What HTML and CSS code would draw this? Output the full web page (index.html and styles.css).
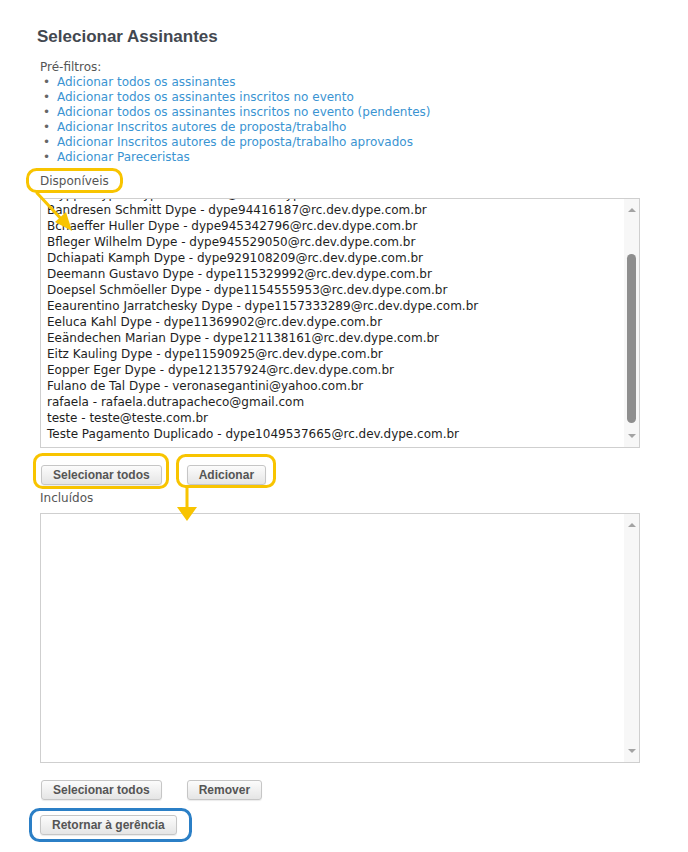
FILE: index.html
```html
<!DOCTYPE html>
<html lang="pt-BR">
<head>
<meta charset="utf-8">
<title>Selecionar Assinantes</title>
<link rel="stylesheet" href="styles.css">
</head>
<body>
<div class="page">
  <h1 class="title">Selecionar Assinantes</h1>
  <div class="prefilters">
    <div class="pf-label">Pré-filtros:</div>
    <ul class="pf-list">
      <li><a href="#">Adicionar todos os assinantes</a></li>
      <li><a href="#">Adicionar todos os assinantes inscritos no evento</a></li>
      <li><a href="#">Adicionar todos os assinantes inscritos no evento (pendentes)</a></li>
      <li><a href="#">Adicionar Inscritos autores de proposta/trabalho</a></li>
      <li><a href="#">Adicionar Inscritos autores de proposta/trabalho aprovados</a></li>
      <li><a href="#">Adicionar Pareceristas</a></li>
    </ul>
  </div>

  <div class="field-label first">Disponíveis</div>
  <div class="listbox">
    <div class="lb-items">
      <div class="lb-inner">
        <div>Alyppe Dype - dype94123456@rc.dev.dype.com.br</div>
        <div>Bandresen Schmitt Dype - dype94416187@rc.dev.dype.com.br</div>
        <div>Bchaeffer Huller Dype - dype945342796@rc.dev.dype.com.br</div>
        <div>Bfleger Wilhelm Dype - dype945529050@rc.dev.dype.com.br</div>
        <div>Dchiapati Kamph Dype - dype929108209@rc.dev.dype.com.br</div>
        <div>Deemann Gustavo Dype - dype115329992@rc.dev.dype.com.br</div>
        <div>Doepsel Schmöeller Dype - dype1154555953@rc.dev.dype.com.br</div>
        <div>Eeaurentino Jarratchesky Dype - dype1157333289@rc.dev.dype.com.br</div>
        <div>Eeluca Kahl Dype - dype11369902@rc.dev.dype.com.br</div>
        <div>Eeändechen Marian Dype - dype121138161@rc.dev.dype.com.br</div>
        <div>Eitz Kauling Dype - dype11590925@rc.dev.dype.com.br</div>
        <div>Eopper Eger Dype - dype121357924@rc.dev.dype.com.br</div>
        <div>Fulano de Tal Dype - veronasegantini@yahoo.com.br</div>
        <div>rafaela - rafaela.dutrapacheco@gmail.com</div>
        <div>teste - teste@teste.com.br</div>
        <div>Teste Pagamento Duplicado - dype1049537665@rc.dev.dype.com.br</div>
      </div>
    </div>
    <div class="scrollbar">
      <span class="arrow up"></span>
      <div class="track"><div class="thumb"></div></div>
      <span class="arrow down"></span>
    </div>
  </div>
  <div class="btn-row">
    <button class="btn">Selecionar todos</button>
    <button class="btn">Adicionar</button>
  </div>

  <div class="field-label">Incluídos</div>
  <div class="listbox empty">
    <div class="lb-items"></div>
    <div class="scrollbar">
      <span class="arrow up"></span>
      <div class="track"></div>
      <span class="arrow down"></span>
    </div>
  </div>
  <div class="btn-row second">
    <button class="btn">Selecionar todos</button>
    <button class="btn">Remover</button>
  </div>
  <div class="btn-row back">
    <button class="btn">Retornar à gerência</button>
  </div>

  <svg class="annotations" width="688" height="852" viewBox="0 0 688 852" aria-hidden="true">
    <g fill="none" stroke="#f8c400" stroke-width="3" stroke-linecap="round">
      <rect x="27.5" y="169.5" width="94" height="22" rx="9"/>
      <line x1="37" y1="193" x2="64" y2="222"/>
      <rect x="34.5" y="454.5" width="133" height="33" rx="8"/>
      <rect x="177.5" y="455.5" width="97" height="31" rx="8"/>
      <line x1="187" y1="487" x2="187" y2="509"/>
    </g>
    <g fill="#f8c400">
      <polygon points="72,231 55,222 66,212"/>
      <polygon points="177,507 197,507 187,521"/>
    </g>
    <rect x="30.5" y="809.5" width="160" height="31" rx="9" fill="none" stroke="#2b7fc6" stroke-width="3"/>
  </svg>
</div>
</body>
</html>
```
FILE: styles.css
```css
html, body {
  margin: 0;
  padding: 0;
  background: #ffffff;
}

.page {
  position: relative;
  width: 688px;
  min-height: 852px;
  box-sizing: border-box;
  padding: 26px 48px 0 40px;
  font-family: "DejaVu Sans", Verdana, sans-serif;
  font-size: 12px;
  color: #222222;
}

.title {
  margin: 0 0 0 -3px;
  font-family: "Liberation Sans", Arial, sans-serif;
  font-size: 17px;
  font-weight: bold;
  line-height: 22px;
  color: #434850;
}

.prefilters {
  margin-top: 12px;
  color: #555555;
  line-height: 15px;
}

.pf-list {
  list-style: none;
  margin: 0;
  padding: 0;
}

.pf-list li::before {
  content: "\2022";
  display: inline-block;
  width: 14px;
  margin-left: 3px;
  color: #666666;
}

.pf-list a {
  color: #3a94d2;
  text-decoration: none;
}

.field-label {
  margin-top: 5px;
  line-height: 16px;
  color: #555555;
}

.field-label.first {
  margin-top: 8px;
}

.listbox {
  margin-top: 9px;
  height: 250px;
  box-sizing: border-box;
  border: 1px solid #cfcfcf;
  display: flex;
  background: #ffffff;
}

.listbox.empty {
  margin-top: 7px;
}

.lb-items {
  flex: 1;
  overflow: hidden;
  padding-left: 6px;
}

.lb-inner {
  margin-top: -13px;
  line-height: 16px;
  white-space: nowrap;
  color: #1e1e1e;
}

.scrollbar {
  width: 15px;
  background: #f7f7f7;
  display: flex;
  flex-direction: column;
  align-items: center;
}

.arrow {
  display: block;
  width: 0;
  height: 0;
  border-left: 4px solid transparent;
  border-right: 4px solid transparent;
}

.arrow.up {
  margin-top: 9px;
  border-bottom: 4px solid #a3a3a3;
}

.arrow.down {
  margin-bottom: 9px;
  border-top: 4px solid #a3a3a3;
}

.track {
  flex: 1;
  width: 100%;
  display: flex;
  justify-content: center;
}

.thumb {
  margin-top: 42px;
  width: 9px;
  height: 169px;
  border-radius: 5px;
  background: #8e8e8e;
}

.btn-row {
  display: flex;
  gap: 25px;
  margin-top: 17px;
  padding-left: 1px;
}

.btn-row.second {
  margin-top: 17px;
}

.btn-row.back {
  margin-top: 15px;
  padding-left: 0;
}

.btn {
  height: 20px;
  padding: 0 11px;
  border: 1px solid #c6c6c6;
  border-radius: 3px;
  background: linear-gradient(#fcfcfc, #e5e5e5);
  box-shadow: 0 1px 1px rgba(0, 0, 0, 0.08);
  font-family: "Liberation Sans", Arial, sans-serif;
  font-size: 12px;
  font-weight: bold;
  color: #555555;
  line-height: 18px;
  cursor: pointer;
}

.annotations {
  position: absolute;
  left: 0;
  top: 0;
  pointer-events: none;
}
```
